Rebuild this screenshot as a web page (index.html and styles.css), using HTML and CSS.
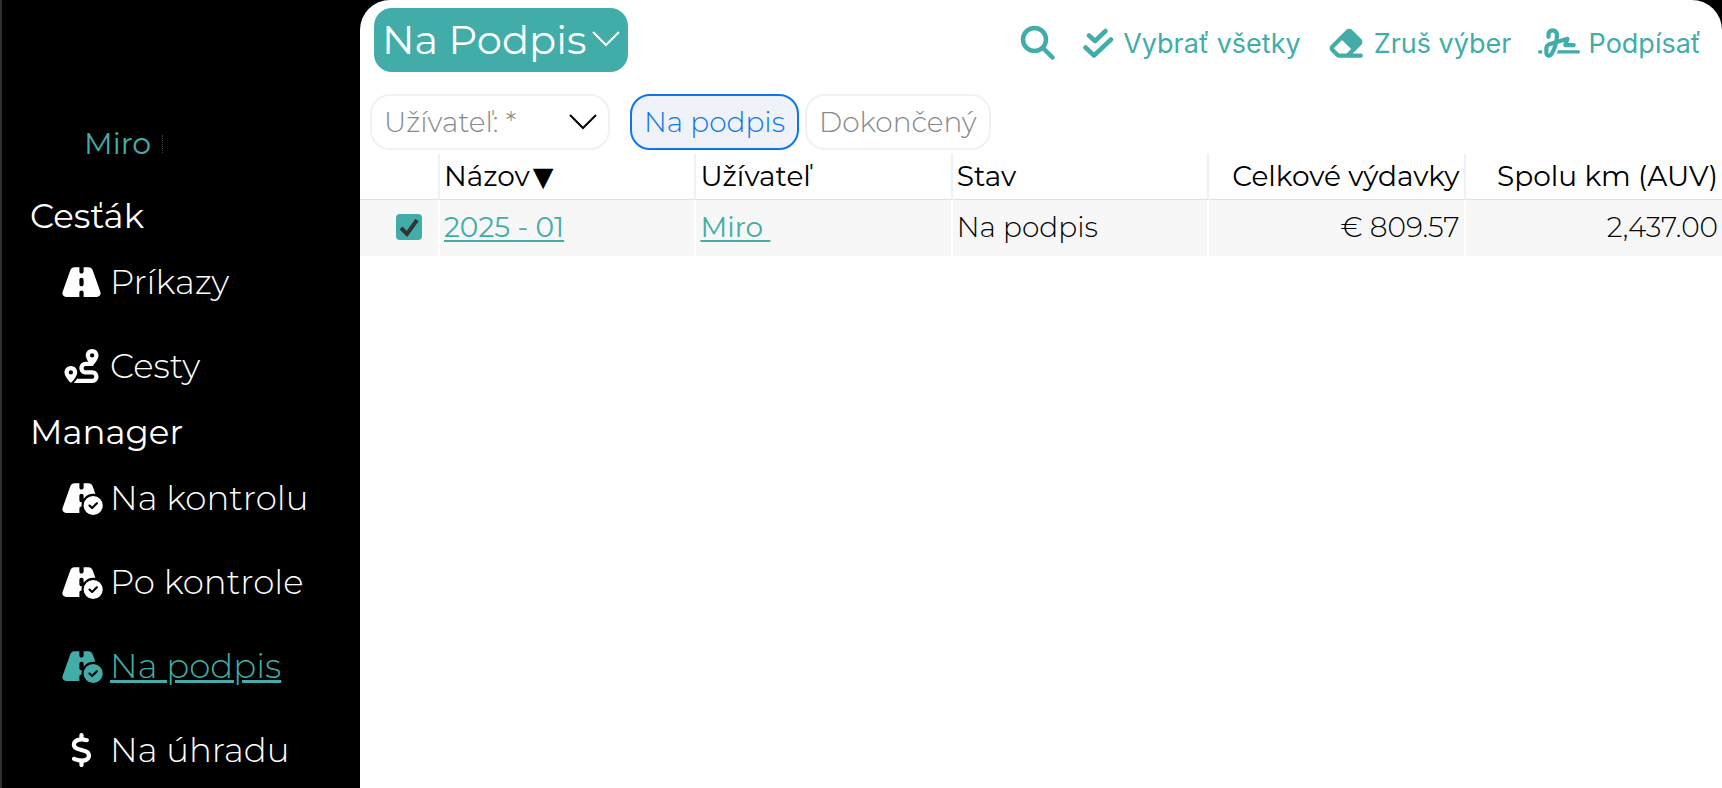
FILE: index.html
```html
<!DOCTYPE html>
<html lang="sk">
<head>
<meta charset="utf-8">
<meta name="viewport" content="width=device-width, initial-scale=1">
<title>Na Podpis</title>
<link rel="stylesheet" href="styles.css">
</head>
<body class="app">
<svg class="sprite" aria-hidden="true">
  <symbol id="road-check" viewBox="0 0 640 512"><path d="M213.200 32H288V96c0 17.700 14.300 32 32 32s32-14.300 32-32V32h74.800c27.100 0 51.300 17.100 60.300 42.600l42.700 120.600c-10.900-2.100-22.200-3.200-33.800-3.200c-59.500 0-112.100 29.600-144 74.800V224c0-17.700-14.300-32-32-32s-32 14.300-32 32v64c0 17.700 14.300 32 32 32c2.300 0 4.600-.3 6.800-.7c-4.500 15.500-6.800 31.800-6.800 48.700c0 5.400 .2 10.700 .7 16l-.7 0c-17.700 0-32 14.300-32 32v64H86.600C56.500 480 32 455.500 32 425.400c0-6.200 1.100-12.400 3.100-18.200L152.900 74.600C162 49.100 186.100 32 213.200 32zM496 224a144 144 0 1 1 0 288 144 144 0 1 1 0-288zm67.300 100.700c-6.200-6.200-16.400-6.200-22.600 0L480 385.400l-28.700-28.700c-6.200-6.200-16.400-6.200-22.600 0s-6.200 16.400 0 22.600l40 40c6.200 6.200 16.400 6.200 22.600 0l72-72c6.200-6.200 6.200-16.400 0-22.600z"/></symbol>
</svg>

<aside class="sidebar">
  <a class="user" href="#">Miro</a>
  <nav class="menu">
    <h2 class="menu-title">Cesťák</h2>
    <a class="menu-item" href="#">
      <svg class="menu-icon" viewBox="0 0 576 512"><path d="M256 32H181.200c-27.100 0-51.300 17.100-60.300 42.600L3.100 407.200C1.100 413 0 419.200 0 425.500C0 455.500 24.500 480 54.500 480H256V416c0-17.700 14.300-32 32-32s32 14.300 32 32v64H521.500c30.200 0 54.500-24.500 54.500-54.500c0-6.300-1.100-12.500-3.100-18.300L455.100 74.600C446 49.100 421.900 32 394.800 32H320V96c0 17.700-14.300 32-32 32s-32-14.300-32-32V32zm64 192v64c0 17.700-14.300 32-32 32s-32-14.300-32-32V224c0-17.700 14.300-32 32-32s32 14.300 32 32z"/></svg>
      <span class="menu-label">Príkazy</span></a>
    <a class="menu-item" href="#">
      <svg class="menu-icon" viewBox="0 0 512 512"><path d="M512 96c0 50.200-59.100 125.100-84.600 155c-3.800 4.400-9.400 6.100-14.500 5H320c-17.700 0-32 14.300-32 32s14.300 32 32 32h96c53 0 96 43 96 96s-43 96-96 96H139.600c8.700-9.900 19.300-22.600 30-36.800c6.300-8.400 12.800-17.600 19-27.200H416c17.700 0 32-14.300 32-32s-14.300-32-32-32H320c-53 0-96-43-96-96s43-96 96-96h39.800c-21-31.500-39.800-67.700-39.800-96c0-53 43-96 96-96s96 43 96 96zM117.100 489.100c-3.800 4.300-7.200 8.100-10.100 11.300l-1.800 2-.2-.2c-6 4.600-14.600 4-20-1.800C59.800 473 0 402.500 0 352c0-53 43-96 96-96s96 43 96 96c0 30-21.100 67-43.500 97.900c-10.700 14.700-21.700 28-30.800 38.500l-.6 .7zM128 352a32 32 0 1 0 -64 0 32 32 0 1 0 64 0zM416 128a32 32 0 1 0 0-64 32 32 0 1 0 0 64z"/></svg>
      <span class="menu-label">Cesty</span></a>
    <h2 class="menu-title">Manager</h2>
    <a class="menu-item" href="#"><svg class="menu-icon"><use href="#road-check"/></svg><span class="menu-label">Na kontrolu</span></a>
    <a class="menu-item" href="#"><svg class="menu-icon"><use href="#road-check"/></svg><span class="menu-label">Po kontrole</span></a>
    <a class="menu-item active" href="#" aria-current="page"><svg class="menu-icon"><use href="#road-check"/></svg><span class="menu-label">Na podpis</span></a>
    <a class="menu-item" href="#">
      <svg class="menu-icon" viewBox="0 0 320 512"><path d="M160 0c17.700 0 32 14.300 32 32V67.700c1.600 .2 3.100 .4 4.700 .7c.4 .1 .7 .1 1.100 .2l48 8.800c17.400 3.200 28.900 19.900 25.700 37.200s-19.900 28.900-37.200 25.700l-47.500-8.700c-31.300-4.600-58.900-1.500-78.300 6.200s-27.200 18.300-29 28.100c-2 10.700-.5 16.700 1.200 20.400c1.800 3.900 5.500 8.300 12.800 13.200c16.300 10.700 41.300 17.700 73.700 26.300l2.900 .8c28.600 7.600 63.600 16.800 89.600 33.800c14.200 9.300 27.600 21.900 35.900 39.500c8.500 17.900 10.300 37.900 6.400 59.200c-6.900 38-33.100 63.400-65.600 76.700c-13.700 5.600-28.600 9.200-44.400 11V480c0 17.700-14.300 32-32 32s-32-14.300-32-32V445.100c-.4-.1-.9-.1-1.300-.2l-.2 0c-24.400-3.800-64.500-14.300-91.500-26.300c-16.100-7.200-23.400-26.100-16.200-42.200s26.100-23.400 42.200-16.200c20.900 9.300 55.300 18.500 75.200 21.600c31.900 4.700 58.200 2 76-5.300c16.900-6.900 24.600-16.900 26.800-28.900c1.900-10.600 .4-16.700-1.300-20.400c-1.900-4-5.600-8.400-13-13.300c-16.400-10.700-41.500-17.700-74-26.300l-2.800-.7C119.400 279.300 84.400 270 58.400 253c-14.200-9.300-27.500-22-35.800-39.600c-8.400-17.900-10.100-37.900-6.100-59.200C23.700 116 52.300 91.200 84.800 78.300c13.300-5.300 27.900-8.900 43.200-11V32c0-17.700 14.300-32 32-32z"/></svg>
      <span class="menu-label">Na úhradu</span></a>
  </nav>
</aside>

<main class="main">
  <header class="header">
    <button class="title" type="button">Na Podpis
      <svg class="chevron" viewBox="0 0 28 16"><path d="M1 1l13 13L27 1"/></svg>
    </button>
    <div class="toolbar">
      <button class="tool" type="button" aria-label="Hľadať">
        <svg class="tool-icon line" width="36" height="36" viewBox="0 0 36 36"><circle cx="14.500" cy="14.500" r="11.500"/><path d="M24 24l8.500 8.500"/></svg>
      </button>
      <button class="tool" type="button">
        <svg class="tool-icon line" width="32" height="32" viewBox="0 0 32 32"><path d="M7 8.500l6 5.500L23.500 4M3.500 20.500l8.500 8L29 12.500"/></svg>
        Vybrať všetky</button>
      <button class="tool" type="button">
        <svg class="tool-icon" width="38" height="34" viewBox="0 0 576 512"><path d="M290.700 57.400L57.400 290.700c-25 25-25 65.500 0 90.500l80 80c12 12 28.300 18.700 45.300 18.700H512c17.700 0 32-14.300 32-32s-14.300-32-32-32H387.900L518.600 285.300c25-25 25-65.500 0-90.500L381.300 57.400c-25-25-65.500-25-90.500 0zM297.400 416H182.600l-80-80L227.300 211.300 364.700 348.700 297.400 416z"/></svg>
        Zruš výber</button>
      <button class="tool" type="button">
        <svg class="tool-icon" width="42" height="34" viewBox="0 0 640 512"><path d="M192 128c0-17.700 14.300-32 32-32s32 14.300 32 32v7.800c0 27.700-2.400 55.300-7.100 82.500l-84.400 25.300c-40.600 12.200-68.400 49.600-68.400 92v71.900c0 40 32.500 72.500 72.500 72.500c26 0 50-13.900 62.900-36.500l13.900-24.300c26.800-47 46.500-97.700 58.400-150.500l94.400-28.300-12.500 37.500c-3.300 9.800-1.600 20.500 4.400 28.800s15.700 13.300 26 13.300H544c17.700 0 32-14.300 32-32s-14.300-32-32-32H460.400l18-53.900c3.800-11.300 .9-23.800-7.400-32.400s-20.700-11.800-32.200-8.400L316.400 198.100c2.400-20.700 3.600-41.400 3.600-62.300V128c0-53-43-96-96-96s-96 43-96 96v32c0 17.700 14.300 32 32 32s32-14.300 32-32V128zm-9.200 177l49-14.700c-10.400 33.800-24.500 66.400-42.100 97.200l-13.900 24.300c-1.500 2.600-4.300 4.300-7.400 4.300c-4.700 0-8.500-3.800-8.500-8.500V335.600c0-14.100 9.300-26.600 22.800-30.700zM24 368c-13.300 0-24 10.700-24 24s10.700 24 24 24H64.300c-.2-2.800-.3-5.600-.3-8.500V368H24zm592 48c13.300 0 24-10.700 24-24s-10.700-24-24-24H305.900c-6.700 16.300-14.200 32.300-22.300 48H616z"/></svg>
        Podpísať</button>
    </div>
  </header>

  <div class="filters">
    <label class="select-wrap">
      <select class="select" aria-label="Užívateľ"><option>Užívateľ: *</option></select>
      <svg class="chevron select-chevron" viewBox="0 0 28 16"><path d="M1 1l13 13L27 1"/></svg>
    </label>
    <button class="chip selected" type="button" aria-pressed="true">Na podpis</button>
    <button class="chip" type="button" aria-pressed="false">Dokončený</button>
  </div>

  <table class="grid">
    <colgroup><col class="col-check"><col><col><col><col><col></colgroup>
    <thead>
      <tr><th></th><th>Názov<span class="sort">▼</span></th><th>Užívateľ</th><th>Stav</th><th class="num">Celkové výdavky</th><th class="num">Spolu km (AUV)</th></tr>
    </thead>
    <tbody>
      <tr>
        <td><label class="check"><input class="check-box" type="checkbox" checked aria-label="Vybrať 2025 - 01"><svg class="check-mark" viewBox="0 0 26 26"><path d="M5 14l6 6L21 6"/></svg></label></td>
        <td><a class="link" href="#">2025 - 01</a></td>
        <td><a class="link" href="#">Miro&nbsp;</a></td>
        <td>Na podpis</td>
        <td class="num">€ 809.57</td>
        <td class="num">2,437.00</td>
      </tr>
    </tbody>
  </table>
</main>
</body>
</html>
```
FILE: styles.css
```css
* { box-sizing: border-box; }
.app {
  --accent: #42ada8;
  --line: #eef2f7;
  margin: 0;
  height: 100vh;
  overflow: hidden;
  display: flex;
  background: #000;
  font-family: Montserrat, Inter, sans-serif;
  font-weight: 300;
}
button, select { font: inherit; cursor: pointer; }
.sprite { position: absolute; width: 0; height: 0; }

.sidebar {
  flex: 0 0 360px;
  padding-top: 120px;
  border-left: 2px solid #2b3030;
  color: #fff;
}
.user {
  display: flex;
  align-items: center;
  gap: 11px;
  margin: 0 0 24px 82px;
  color: var(--accent);
  font-size: 30px;
  font-weight: 400;
  line-height: 48px;
  text-decoration: none;
}
.user::after { content: ""; height: 18px; border-left: 1px dotted #444; }
.menu { display: flex; flex-direction: column; }
.menu-title {
  margin: 0;
  padding-left: 28px;
  font-size: 34px;
  font-weight: 400;
  line-height: 48px;
}
.menu-item {
  display: flex;
  align-items: center;
  gap: 7px;
  height: 84px;
  padding-left: 58px;
  color: inherit;
  font-size: 34px;
  line-height: 44px;
  text-decoration: none;
}
.menu-icon { width: 43px; height: 34px; fill: currentColor; }
.menu-item.active { color: var(--accent); }
.menu-item.active .menu-label { text-decoration: underline; text-decoration-thickness: 3px; }

.main {
  flex: 1;
  min-width: 0;
  background: #fff;
  border-radius: 30px 30px 0 0;
  overflow: hidden;
}
.header {
  display: flex;
  align-items: center;
  justify-content: space-between;
  padding: 8px 21px 0 14px;
}
.title {
  display: flex;
  align-items: center;
  gap: 6px;
  height: 64px;
  padding: 0 8px 2px;
  border: 0;
  border-radius: 18px;
  background: var(--accent);
  color: #fff;
  font-size: 40px;
  font-weight: 400;
}
.chevron { width: 28px; height: 16px; fill: none; stroke: currentColor; stroke-width: 2; }
.toolbar { display: flex; align-items: center; gap: 26px; padding-top: 6px; }
.tool {
  display: flex;
  align-items: center;
  gap: 9px;
  padding: 0;
  border: 0;
  background: none;
  color: var(--accent);
  font-family: Inter, sans-serif;
  font-size: 27px;
  font-weight: 400;
}
.tool-icon { fill: currentColor; }
.tool-icon.line { fill: none; stroke: currentColor; stroke-width: 4.500; stroke-linecap: round; stroke-linejoin: round; }

.filters { display: flex; gap: 6px; padding: 22px 10px 4px; }
.select-wrap { display: grid; align-items: center; width: 240px; margin-right: 14px; }
.select, .chip {
  height: 56px;
  border: 2px solid var(--line);
  border-radius: 20px;
  background: #fff;
  color: #858b8b;
  font-size: 28px;
}
.select { grid-area: 1 / 1; width: 100%; padding: 0 12px; appearance: none; }
.select-chevron { grid-area: 1 / 1; justify-self: end; margin-right: 13px; color: #000; pointer-events: none; }
.chip { padding: 0 12px; }
.chip.selected { border-color: #0f75ea; background: #eff3f9; color: #0f75ea; }

.grid { width: 100%; table-layout: fixed; border-collapse: separate; border-spacing: 0; font-size: 28px; }
.col-check { width: 80px; }
.grid th, .grid td { padding: 0 4px 2px; text-align: left; white-space: nowrap; border-right: 2px solid; }
.grid th { height: 46px; font-weight: 400; border-color: var(--line); border-bottom: 1px solid #d9e2ea; }
.grid td { height: 56px; background: #f7f7f7; border-color: #fff; }
.grid th:last-child, .grid td:last-child { border-right: 0; }
.grid .num { text-align: right; }
.sort { margin-left: 3px; font-family: "DejaVu Sans", sans-serif; font-size: 27px; line-height: 1; }
.link { color: var(--accent); font-weight: 400; text-decoration-thickness: 2px; text-underline-offset: 3px; }
.check { display: grid; justify-content: end; margin-right: 12px; }
.check-box { grid-area: 1 / 1; appearance: none; width: 26px; height: 26px; margin: 0; border-radius: 4px; background: var(--accent); }
.check-mark { grid-area: 1 / 1; width: 26px; height: 26px; fill: none; stroke: #333; stroke-width: 4; pointer-events: none; }
```
